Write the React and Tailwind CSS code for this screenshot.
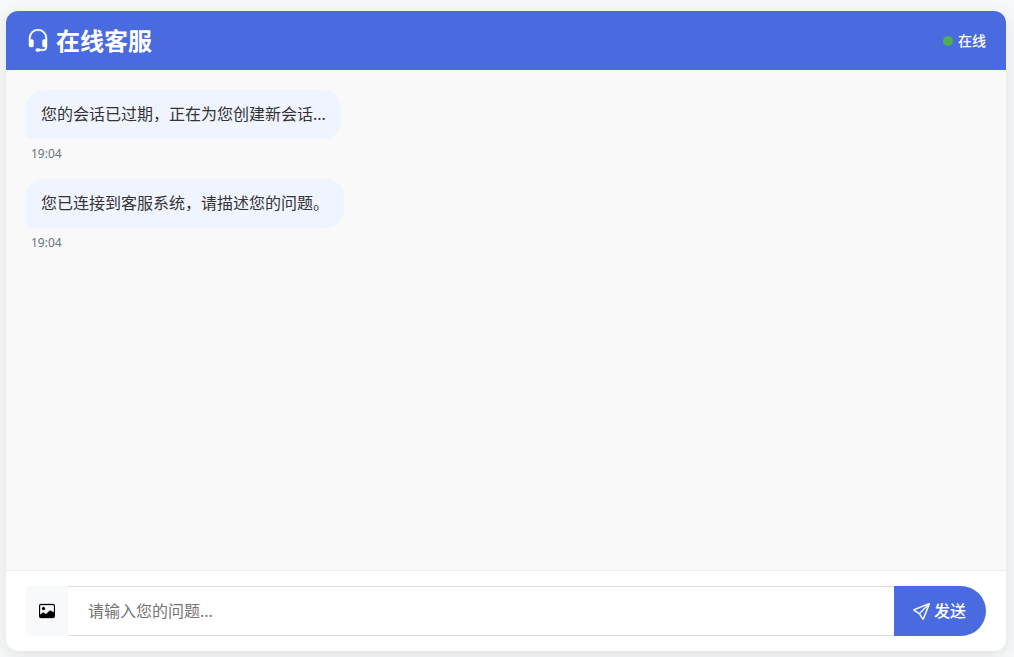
import React, { useState } from 'react'
import { BsHeadset, BsImage, BsSend } from 'react-icons/bs'

const initialMessages = [
  { id: 1, text: '您的会话已过期，正在为您创建新会话...', time: '19:04' },
  { id: 2, text: '您已连接到客服系统，请描述您的问题。', time: '19:04' },
]

const ChatHeader = () => {
  return (
    <header className="flex h-[59px] shrink-0 items-center justify-between bg-[#4a6bdf] px-5 text-white">
      <h1 className="flex items-center gap-1.5 text-2xl font-bold">
        <BsHeadset className="size-6" strokeWidth="0.3" />
        在线客服
      </h1>
      <div className="flex items-center gap-[5px] text-sm font-medium">
        <span className="size-2.5 rounded-full bg-[#4caf50]" />
        <span>在线</span>
      </div>
    </header>
  )
}

const Message = ({ data }) => {
  return (
    <li className="flex max-w-[70%] flex-col items-start">
      <p className="rounded-[18px] rounded-bl-[5px] bg-[#f0f4ff] px-[15px] py-3 text-base leading-[25px] text-[#333]">
        {data.text}
      </p>
      <time className="mt-[5px] px-[5px] text-xs leading-5 text-[#6c757d]">
        {data.time}
      </time>
    </li>
  )
}

const App = () => {
  const [messages] = useState(initialMessages)
  const [text, setText] = useState('')

  return (
    <div className="h-screen bg-[#f8f9fa] pt-[11px] pr-2 pb-1.5 pl-1.5 font-['Noto_Sans','Noto_Sans_CJK_SC',sans-serif]">
      <main className="flex h-full flex-col overflow-hidden rounded-xl bg-white shadow-[0_5px_20px_rgba(0,0,0,0.1)]">
        <ChatHeader />
        <ul className="flex flex-1 flex-col gap-[15px] overflow-y-auto bg-[#f9f9f9] p-5">
          {messages.map((item) => (
            <Message key={item.id} data={item} />
          ))}
        </ul>
        <form
          className="flex shrink-0 border-t border-[#eee] px-5 py-[15px]"
          onSubmit={(e) => e.preventDefault()}
        >
          <button
            type="button"
            aria-label="发送图片"
            className="flex w-[42px] items-center justify-center rounded-l-[5px] bg-[#f8f9fa] text-black"
          >
            <BsImage className="size-4" strokeWidth="0.3" />
          </button>
          <input
            type="text"
            aria-label="问题"
            value={text}
            onChange={(e) => setText(e.target.value)}
            placeholder="请输入您的问题..."
            className="h-[50px] min-w-0 flex-1 border-y border-[#ddd] bg-white px-5 text-base outline-none placeholder:text-[#757575]"
          />
          <button
            type="submit"
            className="flex items-center gap-1 rounded-r-[25px] bg-[#4a6bdf] pr-5 pl-[19px] text-base font-medium text-white"
          >
            <BsSend className="size-[17px]" strokeWidth="0.4" />
            发送
          </button>
        </form>
      </main>
    </div>
  )
}

export default App
